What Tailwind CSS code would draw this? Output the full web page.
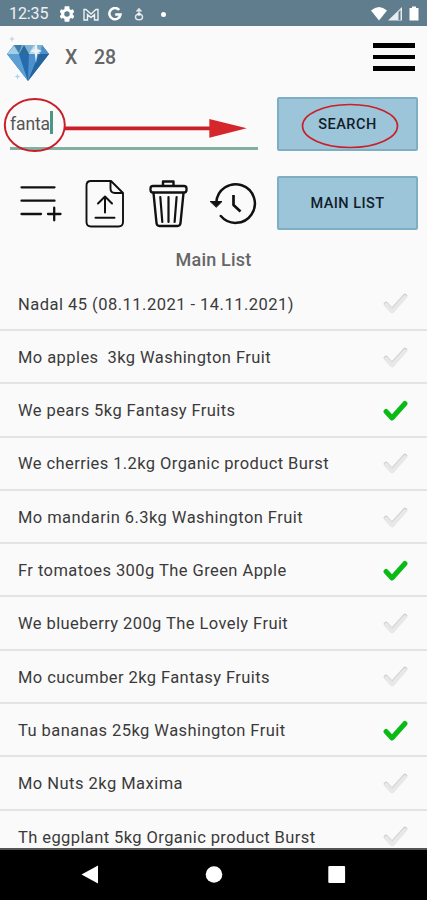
<!DOCTYPE html>
<html lang="en">
<head>
<meta charset="utf-8">
<meta name="viewport" content="width=device-width, initial-scale=1">
<title>Main List</title>
<script src="https://cdn.jsdelivr.net/npm/@tailwindcss/browser@4"></script>
</head>
<body class="bg-[#fafafa]">
<div class="relative flex h-[900px] w-[427px] flex-col overflow-hidden bg-[#fafafa] font-['Roboto',sans-serif]">
  <!-- Status bar -->
  <header class="flex h-[26px] shrink-0 items-center justify-between bg-[#607d8d] pl-[9px] pr-[7px] text-white">
    <div class="flex items-center pt-[2px]">
      <span class="w-[51px] text-[16px] leading-none tracking-[-0.1px] text-white/90">12:35</span>
      <svg class="w-[14px] h-[16px]" viewBox="3 2 18 20" fill="#fff"><path d="M19.4 13c.1-.7.1-1.300 0-2l2.100-1.600-2-3.500-2.500 1a7 7 0 0 0-1.700-1L15 2H9l-.4 3.900a7 7 0 0 0-1.700 1l-2.500-1-2 3.500L4.500 11c-.1.700-.1 1.300 0 2l-2.100 1.600 2 3.500 2.500-1c.5.400 1.100.700 1.700 1L9 22h6l.4-3.900c.6-.3 1.200-.6 1.700-1l2.500 1 2-3.500zM12 15.500a3.500 3.500 0 1 1 0-7 3.500 3.500 0 0 1 0 7z"/></svg>
      <svg class="ml-[9px] h-[13px] w-[16px]" viewBox="0 0 16 13" fill="none" stroke="#fff" stroke-opacity=".9"><path d="M1 12V1.500h2L8 6l5-4.500h2V12h-3.500V6.500L8 9.500l-3.500-3V12z" stroke-width="1.400"/></svg>
      <svg class="ml-[9px] h-[14px] w-[14px]" viewBox="0 0 14 14" fill="none" stroke="#fff" stroke-width="2.500"><path d="M11.200 3A5.600 5.600 0 1 0 12.500 7.500H7.200"/></svg>
      <svg class="ml-[12px] h-[13px] w-[10px]" viewBox="0 0 10 13" fill="none" stroke="#fff" stroke-opacity=".8" stroke-width="1.500"><path d="M5 0v8M2.500 3.500L5 1l2.500 2.500M3 6h4"/><ellipse cx="5" cy="9" rx="3.500" ry="2.800"/></svg>
      <i class="ml-[17px] h-[5px] w-[5px] rounded-full bg-white"></i>
    </div>
    <svg class="mt-[1px] h-[16px] w-[50px]" viewBox="0 0 50 16"><path d="M1 4.500Q9-2.500 17 4.500L9 14.500z" fill="#fff"/><path d="M18 14.500L32 1v13.500z" fill="#fff" fill-opacity=".85"/><path d="M28.500 6v8h2V4z" fill="#607d8d"/><path d="M42 2V.5h4V2h2.500v12.500h-9V2z" fill="#fff"/></svg>
  </header>

  <!-- App bar -->
  <div class="flex h-[64px] shrink-0 items-center justify-between pl-[4px] pr-[12px]">
    <div class="flex items-center">
      <svg class="mb-[3px] h-[50px] w-[48px]" viewBox="4 31 48 50">
        <path d="M14 44h28l7 9-21 27L7 53z" fill="#2f78b7"/>
        <path d="M14 44h28l7 9H7z" fill="#7db4d8"/>
        <path d="M7 53l7-8 5 8z" fill="#a5cde5"/><path d="M19 53l5-9 5 9z" fill="#2b6b96"/><path d="M14 44h8l-3 8z" fill="#3c7da8"/>
        <path d="M29 53l5-9 6 9z" fill="#bcdcec"/><path d="M40 53l2-9 7 9z" fill="#4b8fc5"/>
        <path d="M7 53h12l9 27z" fill="#5b9fd4"/><path d="M19 53h10l-1 27z" fill="#276bac"/><path d="M29 53h10L28 80z" fill="#4d91cc"/><path d="M39 53h10L28 80z" fill="#24649f"/>
        <path d="M36 37l1.400 11L42 50l-4.600 1.500L36 62l-1.400-10.500L30 50l4.600-2z" fill="#edf2f6"/>
        <path d="M12 35l.8 2.200 2.200.8-2.200.8L12 41l-.8-2.200L9 38l2.200-.8z" fill="#c4d2e4"/><path d="M17.500 72.500l.8 2.200 2.200.8-2.200.8-.8 2.200-.8-2.200-2.200-.8 2.200-.8z" fill="#a9d2f0"/>
      </svg>
      <span class="ml-[13px] w-[29px] text-[19.500px] font-medium leading-none text-[#666]">X</span>
      <span class="text-[19.500px] font-medium leading-none text-[#666]">28</span>
    </div>
    <div class="mb-[2px] flex w-[42px] flex-col gap-[7px]">
      <i class="h-[4.500px] bg-black"></i><i class="h-[4.500px] bg-black"></i><i class="h-[4.500px] bg-black"></i>
    </div>
  </div>

  <!-- Search row -->
  <div class="flex h-[80px] shrink-0 items-start justify-between pl-[10px] pr-[9px] pt-[7px]">
    <div class="flex h-[53px] w-[248px] items-start border-b-[3px] border-[#83afa2] pt-[14px]">
      <span class="text-[17.500px] leading-[26px] tracking-[-0.100px] text-[#555]">fanta</span><i class="h-[23px] w-[2.500px] bg-[#4c9682]"></i>
    </div>
    <button class="flex h-[54px] w-[141px] items-center justify-center rounded-[2px] border-2 border-[#7fadc3] bg-[#9dc5d9] pb-px text-[14.500px] font-medium tracking-[0.500px] text-[#10202a]"><span class="mt-[2px]">SEARCH</span></button>
  </div>

  <!-- Tool row -->
  <div class="flex h-[70px] shrink-0 items-start justify-between pl-[20px] pr-[9px] pt-[6px]">
    <svg class="h-[54px] w-[238px]" viewBox="20 176 238 54" fill="none" stroke="#111" stroke-linecap="round" stroke-linejoin="round">
      <path d="M21.500 187.300h33M21.500 200.700h33M21.500 214h19.500M48 214h12.500M54.200 207.700v12.600" stroke-width="2.300"/>
      <path d="M91 181h20l12 12v29q0 4.500-4.500 4.500H91q-4.500 0-4.500-4.500v-36.500Q86.500 181 91 181zM110.500 181v7.500q0 4.500 4.500 4.500h8" stroke-width="1.900"/>
      <path d="M105 212.500v-15.500M98 203.500l7-7 7 7M95.500 217.800h19" stroke-width="2"/>
      <rect x="150.500" y="186" width="36" height="6.500" rx="2.500" stroke-width="2.300"/>
      <path d="M163 185.500v-4h10.500v4M153.500 193l3 30q.3 3 3 3h18q2.700 0 3-3l3-30" stroke-width="2.400"/>
      <path d="M160.300 197l2 25M168.500 197v25M176.600 197l-2 25" stroke-width="2.200"/>
      <path d="M216.300 202.500a19.300 19.300 0 1 1 4.500 13.500" stroke-width="2.500"/>
      <path d="M210.500 201.500h11.500l-5.500 5.500z" fill="#111" stroke-width="1"/>
      <path d="M233.500 195v10l7 6.500" stroke-width="2.700" stroke-linecap="butt"/>
    </svg>
    <button class="flex h-[54px] w-[141px] items-center justify-center rounded-[2px] border-2 border-[#7fadc3] bg-[#9dc5d9] pb-px text-[14.500px] font-medium tracking-[0.450px] text-[#10202a]"><span class="mt-[3px]">MAIN LIST</span></button>
  </div>

  <h1 class="h-[37.700px] shrink-0 pt-[8px] text-center text-[18px] font-medium leading-[24px] tracking-[0.200px] text-[#666]">Main List</h1>

  <!-- Items -->
  <ul id="items" class="min-h-0 flex-1 overflow-hidden"></ul>

  <!-- Navigation bar -->
  <nav class="flex h-[52px] shrink-0 justify-center border-t-2 border-[#555] bg-black">
    <svg class="h-[50px] w-[427px]" viewBox="0 850 427 50" fill="#fff"><path d="M81.500 874.500L98 865.500v18z"/><circle cx="214" cy="874.500" r="8.300"/><rect x="328.300" y="866" width="16.800" height="17" rx="1"/></svg>
  </nav>

  <!-- Highlight annotations -->
  <svg class="pointer-events-none absolute left-0 top-[90px] h-[70px] w-[427px]" viewBox="0 90 427 70" fill="none" stroke="#c91f28">
    <ellipse cx="34.800" cy="125" rx="30" ry="26" stroke-width="2"/>
    <path d="M65 128.300h146" stroke-width="3.800"/>
    <path d="M209.300 119l37.500 9.300-37.500 9.500z" fill="#d5262c" stroke="none"/>
    <ellipse cx="350" cy="126" rx="47.500" ry="21.500" stroke-width="1.600"/>
  </svg>
</div>
<script>
const items = [
  ['Nadal 45 (08.11.2021 - 14.11.2021)', 0, 276],
  ['Mo apples  3kg Washington Fruit', 0, 253],
  ['We pears 5kg Fantasy Fruits', 1, 217.5],
  ['We cherries 1.2kg Organic product Burst', 0, 311],
  ['Mo mandarin 6.3kg Washington Fruit', 0, 285],
  ['Fr tomatoes 300g The Green Apple', 1, 269],
  ['We blueberry 200g The Lovely Fruit', 0, 270.5],
  ['Mo cucumber 2kg Fantasy Fruits', 0, 252],
  ['Tu bananas 25kg Washington Fruit', 1, 267.5],
  ['Mo Nuts 2kg Maxima', 0, 165],
  ['Th eggplant 5kg Organic product Burst', 0, 297.5]
];
const list = document.getElementById('items');
const ctx = document.createElement('canvas').getContext('2d');
ctx.font = '16.5px Roboto';
for (const [text, done, width] of items) {
  const spacing = (width - ctx.measureText(text).width) / text.length;
  const li = document.createElement('li');
  li.className = 'flex h-[53.3px] items-center justify-between border-b-2 border-[#e4e4e4] pl-[18px] pr-[19px]';
  li.innerHTML = `<span class="mt-[3px] whitespace-pre text-[16.5px] leading-none text-[#3a3a3a]" style="letter-spacing:${spacing}px">${text}</span>` +
    (done
      ? '<svg class="mt-[2px] h-[22px] w-[25px]" viewBox="0 0 25 22"><path d="M3 11.500l6 6.500L22 3.500" fill="none" stroke="#0cba17" stroke-width="5" stroke-linecap="round" stroke-linejoin="round"/></svg>'
      : '<svg class="mt-[2px] h-[22px] w-[25px]" viewBox="0 0 25 22" fill="none" stroke-linecap="round" stroke-linejoin="round"><path d="M3 11l6 6.500L22 3" stroke="#cfcfcf" stroke-width="4.500"/><path d="M3.200 11.800l6 6.500L22 4" stroke="#e8e8e8" stroke-width="4"/></svg>');
  list.appendChild(li);
}
</script>
</body>
</html>
